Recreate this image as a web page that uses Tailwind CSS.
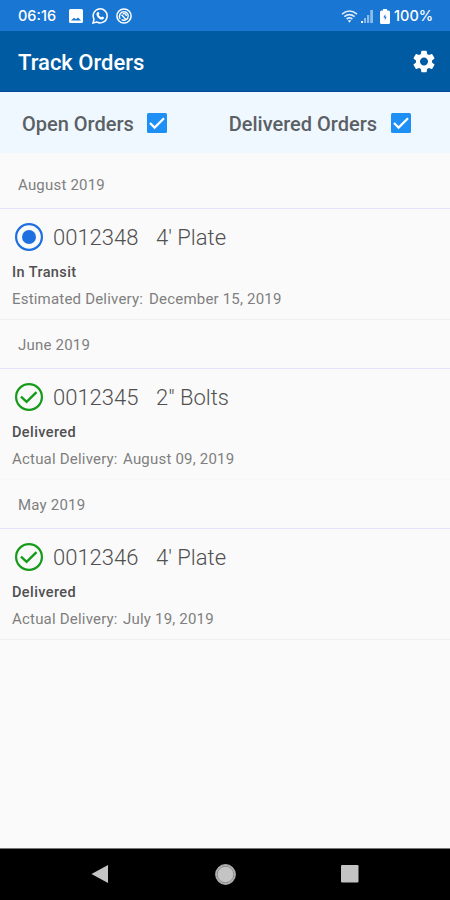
<!DOCTYPE html>
<html lang="en">
<head>
  <meta charset="UTF-8" />
  <title>Track Orders</title>
  <script src="https://cdn.jsdelivr.net/npm/@tailwindcss/browser@4"></script>
</head>
<body class="h-screen w-full flex flex-col overflow-hidden bg-[#fafafa] font-[Roboto,sans-serif] whitespace-nowrap">

  <!-- status bar -->
  <div class="h-[31px] shrink-0 bg-[#1976d2] flex items-center text-white pl-[18px] pr-[15px] pt-px">
    <span class="w-[50px] font-[Inter,sans-serif] text-[14.5px] font-medium">06:16</span>
    <svg class="w-[14px] h-[14px] ml-px" viewBox="0 0 14 14"><path fill="#fff" fill-rule="evenodd" d="M1.5 0h11Q14 0 14 1.5v11q0 1.500-1.500 1.500h-11Q0 14 0 12.500v-11Q0 0 1.500 0zM2 11.500h10L9 8.500 7 10.300 5 8.800z"/></svg>
    <svg class="w-[16px] h-[16px] ml-[9px]" viewBox="0 0 16 16"><path fill="none" stroke="#fff" stroke-width="1.500" d="M1 15l1-3.800A7 7 0 1 1 4.800 14z"/><path fill="#fff" d="M5.400 4.200l1.200-.2.900 2-.8 1c.6 1.100 1.300 1.700 2.400 2.300l.9-.9 2 .9c.1 1.500-.9 2.400-2.200 2.300C7.200 11.200 4.700 8.700 4.400 6.200c0-.8.400-1.600 1-2z"/></svg>
    <svg class="w-[16px] h-[16px] ml-[8px]" viewBox="0 0 16 16" fill="none" stroke="#fff"><circle cx="8" cy="8" r="7.100" stroke-width="1.500"/><path stroke-width="1.400" d="M4.300 10.800A4.400 4.400 0 0 1 8 3.800c2.500 0 4.200 1.900 4.200 4.200 0 1.800-1 3-2.200 3.600L5.600 6.800M5.600 11.700c1.200.7 2.700.7 3.900.1M6.800 5.900c1.600-.8 3.500.3 3.500 2.100"/></svg>
    <svg class="w-[17px] h-[13px] ml-auto" viewBox="0 0 17 13" fill="none" stroke="#fff" stroke-opacity=".85" stroke-width="1.600"><path d="M1 4.200Q8.500-2.200 16 4.200M3.300 6.700q5.200-4.200 10.400 0M5.600 9q2.900-2.200 5.800 0"/><path fill="#fff" stroke="none" d="M6.800 10.200h3.400L8.500 12.800z"/></svg>
    <svg class="w-[12px] h-[13px] ml-[3px]" viewBox="0 0 12 13" fill="#fff"><path d="M0 11h2v2H0z"/><path fill-opacity=".5" d="M3 8h2v5H3zM6 5h2.200v8H6zM9.200 0H12v13H9.200z"/></svg>
    <svg class="w-[10px] h-[15px] ml-[7px]" viewBox="0 0 10 15"><path fill="#fff" fill-rule="evenodd" d="M3 0h4v1.500h1.500Q10 1.500 10 3v10.500Q10 15 8.500 15h-7Q0 15 0 13.500V3q0-1.500 1.500-1.500H3zM5.300 5L3.400 8.500h1.400v2.800L6.700 7.700H5.300z"/></svg>
    <span class="ml-[4px] w-[41px] font-[Inter,sans-serif] text-[14.5px] font-medium">100%</span>
  </div>

  <!-- app bar -->
  <header class="h-[61px] shrink-0 bg-[#015ba3] border-b border-[#05479a] flex items-center justify-between pl-[18px] pr-[15px]">
    <h1 class="pt-[2px] text-[22px] font-medium text-white">Track Orders</h1>
    <svg class="w-[22px] h-[23px]" viewBox="2.200 2 19.600 20" fill="#fff"><path d="M19.140 12.940c.04-.3.060-.61.060-.94 0-.32-.02-.64-.07-.94l2.030-1.580c.18-.14.230-.41.120-.61l-1.920-3.320c-.12-.22-.37-.29-.59-.22l-2.390.96c-.5-.38-1.030-.7-1.620-.94l-.36-2.540c-.04-.24-.24-.41-.48-.41h-3.840c-.24 0-.43.170-.47.410l-.36 2.540c-.59.240-1.130.570-1.620.940l-2.390-.96c-.22-.08-.47 0-.59.220L2.740 8.870c-.12.210-.08.470.120.610l2.030 1.580c-.05.300-.09.630-.09.940s.02.640.07.940l-2.030 1.580c-.18.140-.23.410-.12.610l1.920 3.320c.12.220.37.290.59.220l2.390-.96c.5.380 1.030.7 1.620.940l.36 2.540c.05.240.24.410.48.410h3.840c.24 0 .44-.17.470-.41l.36-2.540c.59-.24 1.130-.56 1.620-.94l2.390.96c.22.080.47 0 .59-.22l1.920-3.320c.12-.22.070-.47-.12-.61l-2.010-1.580zM12 15.600c-1.980 0-3.600-1.620-3.600-3.600s1.620-3.600 3.600-3.600 3.600 1.620 3.600 3.600-1.620 3.600-3.600 3.600z"/></svg>
  </header>

  <!-- filters -->
  <div class="h-[61px] shrink-0 bg-[#f0f8ff] flex items-center justify-between pl-[22px] pr-[39px] text-[20px] font-medium text-[#5b6065]">
    <label class="flex items-center gap-[13.500px]">
      <span class="pt-[3px]">Open Orders</span>
      <svg class="w-[20px] h-[20px]" viewBox="0 0 20 20"><rect width="20" height="20" rx="1.500" fill="#1e90f5"/><path d="M3 10l4.600 4.600L17 5.200" fill="none" stroke="#fff" stroke-width="2.200"/></svg>
    </label>
    <label class="flex items-center gap-[14px]">
      <span class="pt-[3px]">Delivered Orders</span>
      <svg class="w-[20px] h-[20px]" viewBox="0 0 20 20"><rect width="20" height="20" rx="1.500" fill="#1e90f5"/><path d="M3 10l4.600 4.600L17 5.200" fill="none" stroke="#fff" stroke-width="2.200"/></svg>
    </label>
  </div>

  <!-- order list -->
  <main class="flex-1 pt-[7px] text-[15px] tracking-[0.2px] text-[#7f7f7f]">
    <section>
      <h2 class="h-[49px] border-b border-[#e2e2f8] flex items-center pl-[18px] pt-[2px]">August 2019</h2>
      <div class="h-[111px] border-b border-[#f0f0f0] pl-[12px] pt-[13px]">
        <div class="h-[30px] flex items-center text-[22px] tracking-normal font-light text-[#505050]">
          <svg class="w-[28px] h-[28px] ml-[3px] mr-[10px]" viewBox="0 0 28 28"><circle cx="14" cy="14" r="12.900" fill="none" stroke="#1e6fe0" stroke-width="2.200"/><circle cx="14" cy="14" r="7" fill="#1e6fe0"/></svg>
          <span class="w-[103px]">0012348</span><span>4' Plate</span>
        </div>
        <p class="mt-[9px] h-[24px] leading-[24px] text-[14.5px] tracking-[0.400px] font-medium text-[#505050]">In Transit</p>
        <p class="mt-[2px] h-[24px] leading-[24px] flex"><span class="w-[137px]">Estimated Delivery:</span><span>December 15, 2019</span></p>
      </div>
    </section>
    <section>
      <h2 class="h-[49px] border-b border-[#e2e2f8] flex items-center pl-[18px] pt-[2px]">June 2019</h2>
      <div class="h-[111px] border-b border-[#f7f7f7] pl-[12px] pt-[13px]">
        <div class="h-[30px] flex items-center text-[22px] tracking-normal font-light text-[#505050]">
          <svg class="w-[28px] h-[28px] ml-[3px] mr-[10px]" viewBox="0 0 28 28" fill="none" stroke="#149c19"><circle cx="14" cy="14" r="12.900" stroke-width="2.200"/><path d="M6 13.600l5.600 5.200 9.900-9.600" stroke-width="2.400"/></svg>
          <span class="w-[103px]">0012345</span><span>2" Bolts</span>
        </div>
        <p class="mt-[9px] h-[24px] leading-[24px] text-[14.5px] tracking-[0.400px] font-medium text-[#505050]">Delivered</p>
        <p class="mt-[2px] h-[24px] leading-[24px] flex"><span class="w-[111px]">Actual Delivery:</span><span>August 09, 2019</span></p>
      </div>
    </section>
    <section>
      <h2 class="h-[49px] border-b border-[#e2e2f8] flex items-center pl-[18px] pt-[2px]">May 2019</h2>
      <div class="h-[111px] border-b border-[#f0f0f0] pl-[12px] pt-[13px]">
        <div class="h-[30px] flex items-center text-[22px] tracking-normal font-light text-[#505050]">
          <svg class="w-[28px] h-[28px] ml-[3px] mr-[10px]" viewBox="0 0 28 28" fill="none" stroke="#149c19"><circle cx="14" cy="14" r="12.900" stroke-width="2.200"/><path d="M6 13.600l5.600 5.200 9.900-9.600" stroke-width="2.400"/></svg>
          <span class="w-[103px]">0012346</span><span>4' Plate</span>
        </div>
        <p class="mt-[9px] h-[24px] leading-[24px] text-[14.5px] tracking-[0.400px] font-medium text-[#505050]">Delivered</p>
        <p class="mt-[2px] h-[24px] leading-[24px] flex"><span class="w-[111px]">Actual Delivery:</span><span>July 19, 2019</span></p>
      </div>
    </section>
  </main>

  <!-- navigation bar -->
  <nav class="h-[52px] shrink-0 bg-black border-t border-[#777] flex items-center justify-between pl-[91px] pr-[91px] pb-px">
    <svg class="w-[18px] h-[18px]" viewBox="0 0 18 18"><path fill="#c4c4c4" d="M17 0v18L.5 9z"/></svg>
    <svg class="w-[21px] h-[21px]" viewBox="0 0 21 21"><circle cx="10.500" cy="10.500" r="9.800" fill="#c4c4c4" stroke="#aaa" stroke-width="1.200"/><circle cx="10.500" cy="10.500" r="8.300" fill="none" stroke="#777" stroke-width=".8"/></svg>
    <svg class="w-[18px] h-[18px]" viewBox="0 0 18 18"><rect width="17.500" height="17.500" rx="1.200" fill="#c4c4c4"/></svg>
  </nav>
</body>
</html>
